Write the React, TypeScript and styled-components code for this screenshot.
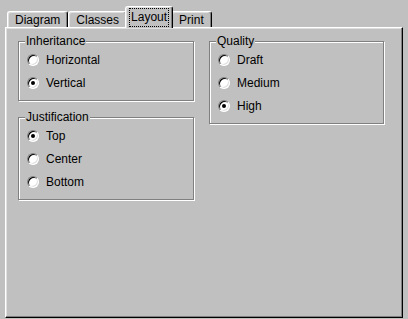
import React, { useState } from 'react';
import styled, { createGlobalStyle } from 'styled-components';

const GlobalStyle = createGlobalStyle`
  html, body {
    margin: 0;
    padding: 0;
    background: #c0c0c0;
    overflow: hidden;
  }
  body {
    font-family: "Liberation Sans", Arial, sans-serif;
    font-size: 12px;
    color: #000;
  }
`;

const Window = styled.div`
  width: 408px;
  height: 319px;
  background: #c0c0c0;
  padding: 6px 0 0 5px;
  box-sizing: border-box;
  display: flex;
  flex-direction: column;
`;

const TabRow = styled.div`
  display: flex;
  align-items: flex-end;
  height: 21px;
  margin-left: 2px;
`;

const Tab = styled.div<{ $active?: boolean }>`
  position: relative;
  z-index: ${p => (p.$active ? 2 : 1)};
  box-sizing: border-box;
  height: ${p => (p.$active ? '22px' : '16px')};
  margin: ${p => (p.$active ? '0 -2px -1px -2px' : '0')};
  padding: ${p => (p.$active ? '1px 3px 0 3px' : '0 7px')};
  display: flex;
  align-items: ${p => (p.$active ? 'flex-start' : 'center')};
  background: #c0c0c0;
  border-top: 1px solid #fff;
  border-left: 1px solid #fff;
  border-right: 1px solid #000;
  border-radius: 3px 3px 0 0;
  box-shadow: inset -1px 0 0 #808080, inset 1px 1px 0 #dfdfdf;
  line-height: 14px;
  white-space: nowrap;
  cursor: default;
`;

const FocusLabel = styled.span`
  border: 1px dotted #000;
  padding: 1px 1px 2px 1px;
  line-height: 14px;
`;

const Panel = styled.div`
  width: 398px;
  height: 291px;
  box-sizing: border-box;
  border-top: 1px solid #fff;
  border-left: 1px solid #fff;
  border-right: 1px solid #000;
  border-bottom: 1px solid #000;
  box-shadow: inset -1px -1px 0 #808080, inset 1px 1px 0 #dfdfdf;
  padding: 13px 0 0 12px;
  display: flex;
  align-items: flex-start;
  gap: 15px;
`;

const Column = styled.div`
  display: flex;
  flex-direction: column;
  gap: 16px;
`;

const Group = styled.div<{ $w: number }>`
  width: ${p => p.$w}px;
  box-sizing: border-box;
  border: 1px solid #808080;
  box-shadow: 1px 1px 0 #fff, inset 1px 1px 0 #fff;
  padding: 0 0 6px 8px;
  display: flex;
  flex-direction: column;
`;

const Legend = styled.span`
  align-self: flex-start;
  margin: -8px 0 0 -2px;
  padding: 0 1px;
  height: 14px;
  line-height: 14px;
  background: #c0c0c0;
`;

const Option = styled.label`
  display: flex;
  align-items: center;
  gap: 7px;
  height: 23px;
  cursor: default;
`;

const RadioDot = styled.span<{ $checked?: boolean }>`
  position: relative;
  width: 12px;
  height: 12px;
  box-sizing: border-box;
  border-radius: 50%;
  background: #fff;
  border-top: 1px solid #808080;
  border-left: 1px solid #808080;
  border-right: 1px solid #fff;
  border-bottom: 1px solid #fff;
  box-shadow: inset 1px 1px 0 #000, inset -1px -1px 0 #dfdfdf;
  flex: none;

  &::after {
    content: '';
    display: ${p => (p.$checked ? 'block' : 'none')};
    position: absolute;
    left: 3px;
    top: 3px;
    width: 4px;
    height: 4px;
    border-radius: 50%;
    background: #000;
  }
`;

type RadioGroupProps = {
  title: string;
  width: number;
  options: string[];
  initial: string;
};

const RadioGroup: React.FC<RadioGroupProps> = ({ title, width, options, initial }) => {
  const [value, setValue] = useState(initial);
  return (
    <Group $w={width}>
      <Legend>{title}</Legend>
      {options.map(o => (
        <Option key={o} onClick={() => setValue(o)}>
          <RadioDot $checked={value === o} />
          <span>{o}</span>
        </Option>
      ))}
    </Group>
  );
};

const tabs = ['Diagram', 'Classes', 'Layout', 'Print'];

const App: React.FC = () => {
  const [active, setActive] = useState('Layout');

  return (
    <>
      <GlobalStyle />
      <Window>
        <TabRow>
          {tabs.map(t => (
            <Tab key={t} $active={t === active} onClick={() => setActive(t)}>
              {t === active ? <FocusLabel>{t}</FocusLabel> : t}
            </Tab>
          ))}
        </TabRow>
        <Panel>
          <Column>
            <RadioGroup
              title="Inheritance"
              width={176}
              options={['Horizontal', 'Vertical']}
              initial="Vertical"
            />
            <RadioGroup
              title="Justification"
              width={176}
              options={['Top', 'Center', 'Bottom']}
              initial="Top"
            />
          </Column>
          <Column>
            <RadioGroup
              title="Quality"
              width={175}
              options={['Draft', 'Medium', 'High']}
              initial="High"
            />
          </Column>
        </Panel>
      </Window>
    </>
  );
};

export default App;
